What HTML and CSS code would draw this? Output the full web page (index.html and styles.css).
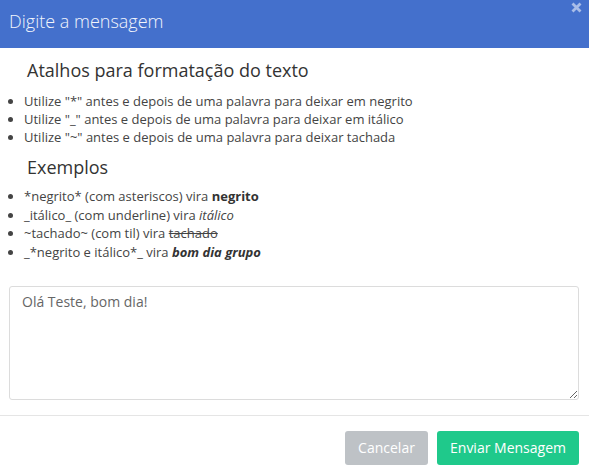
FILE: index.html
```html
<!DOCTYPE html>
<html lang="pt">
<head>
<meta charset="utf-8">
<title>Digite a mensagem</title>
<link rel="stylesheet" href="styles.css">
</head>
<body>
<div class="modal">
  <div class="modal-header">
    <h4 class="modal-title">Digite a mensagem</h4>
    <span class="close">
      <svg width="11" height="11" viewBox="0 0 11 11"><path d="M1.5 1.5 L9.5 9.5 M9.5 1.5 L1.5 9.5" stroke="#a9bde8" stroke-width="2.8" stroke-linecap="butt"/></svg>
    </span>
  </div>
  <div class="modal-body">
    <h3 class="section-title">Atalhos para formatação do texto</h3>
    <ul class="list">
      <li>Utilize "*" antes e depois de uma palavra para deixar em negrito</li>
      <li>Utilize "_" antes e depois de uma palavra para deixar em itálico</li>
      <li>Utilize "~" antes e depois de uma palavra para deixar tachada</li>
    </ul>
    <h3 class="section-title">Exemplos</h3>
    <ul class="list list-examples">
      <li>*negrito* (com asteriscos) vira <b>negrito</b></li>
      <li>_itálico_ (com underline) vira <i>itálico</i></li>
      <li>~tachado~ (com til) vira <s>tachado</s></li>
      <li>_*negrito e itálico*_ vira <b><i>bom dia grupo</i></b></li>
    </ul>
    <textarea class="message">Olá Teste, bom dia!</textarea>
  </div>
  <div class="modal-footer">
    <button class="btn btn-cancel">Cancelar</button>
    <button class="btn btn-send">Enviar Mensagem</button>
  </div>
</div>
</body>
</html>
```
FILE: styles.css
```css
* { box-sizing: border-box; }
html, body { margin: 0; padding: 0; background: #fff; }
body {
  font-family: "Open Sans", "Liberation Sans", sans-serif;
  color: #333;
  width: 589px;
  height: 474px;
  overflow: hidden;
}
.modal { display: flex; flex-direction: column; }
.modal-header {
  background: #4470cc;
  height: 48px;
  padding: 0 9px;
  display: flex;
  align-items: center;
  justify-content: space-between;
  position: relative;
}
.modal-title {
  margin: 0;
  font-weight: 300;
  font-size: 18px;
  color: #f2f5fc;
  line-height: 20px;
  margin-top: -7px;
}
.close {
  position: absolute;
  top: 2px;
  right: 7px;
  display: flex;
}
.modal-body {
  padding: 11px 9px 15px 9px;
  display: flex;
  flex-direction: column;
}
.section-title {
  margin: 0 0 0 18px;
  font-weight: 400;
  font-size: 18px;
  line-height: 22px;
  color: #333;
}
.list {
  margin: 11px 0 10px 0;
  padding-left: 15px;
  font-size: 13px;
  line-height: 18px;
  color: #444;
}
.list-examples { line-height: 18.5px; margin-top: 9px; margin-bottom: 25px; }
.list b { font-weight: 700; color: #333; }
.list s { text-decoration: line-through; }
.message {
  display: block;
  width: 570px;
  height: 114px;
  border: 1px solid #dcdcdc;
  border-radius: 3px;
  padding: 5px 12px 6px 12px;
  font-family: "Open Sans", "Liberation Sans", sans-serif;
  font-size: 14px;
  line-height: 20px;
  color: #666;
  resize: vertical;
  margin: 0;
}
.modal-footer {
  border-top: 1px solid #e5e5e5;
  padding: 15px 10px 15px 9px;
  display: flex;
  justify-content: flex-end;
  gap: 9px;
}
.btn {
  font-family: "Open Sans", "Liberation Sans", sans-serif;
  font-size: 14px;
  line-height: 20px;
  height: 34px;
  padding: 6px 12px;
  border: none;
  border-radius: 3px;
  color: #fff;
}
.btn-cancel { background: #bec2c6; width: 83px; }
.btn-send { background: #1fc98b; width: 142px; }
```
